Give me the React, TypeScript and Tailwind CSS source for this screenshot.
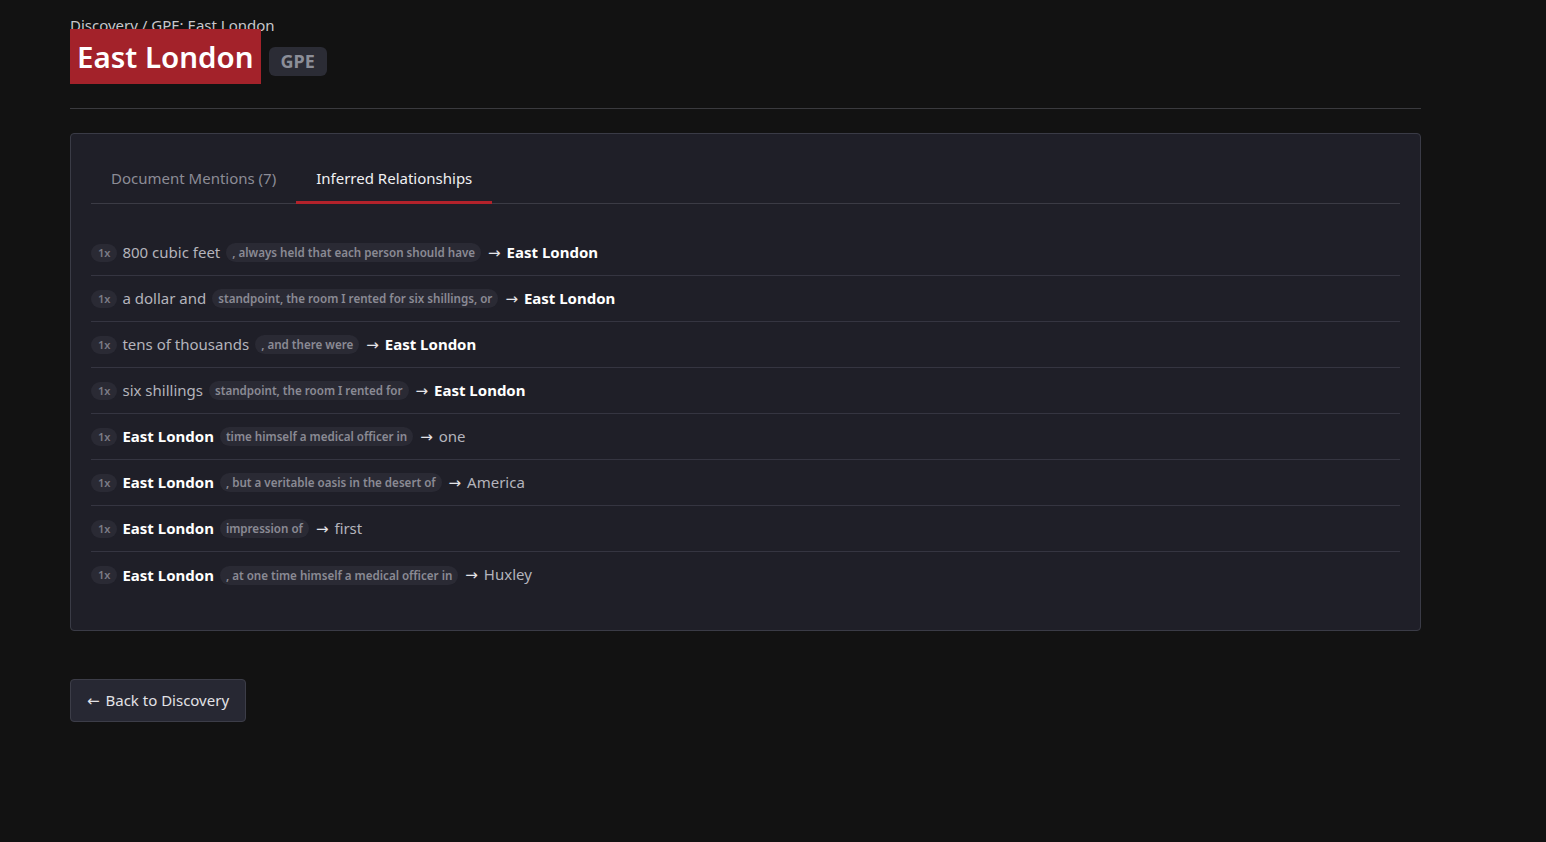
import React from "react";

type Row = { src: string; srcBold?: boolean; ctx: string; tgt: string; tgtBold?: boolean };

const rows: Row[] = [
  { src: "800 cubic feet", ctx: ", always held that each person should have", tgt: "East London", tgtBold: true },
  { src: "a dollar and", ctx: "standpoint, the room I rented for six shillings, or", tgt: "East London", tgtBold: true },
  { src: "tens of thousands", ctx: ", and there were", tgt: "East London", tgtBold: true },
  { src: "six shillings", ctx: "standpoint, the room I rented for", tgt: "East London", tgtBold: true },
  { src: "East London", srcBold: true, ctx: "time himself a medical officer in", tgt: "one" },
  { src: "East London", srcBold: true, ctx: ", but a veritable oasis in the desert of", tgt: "America" },
  { src: "East London", srcBold: true, ctx: "impression of", tgt: "first" },
  { src: "East London", srcBold: true, ctx: ", at one time himself a medical officer in", tgt: "Huxley" },
];

export default function App() {
  return (
    <div
      className="min-h-[842px] w-full bg-[#121212] text-[#d4d4d8]"
      style={{ fontFamily: '"Noto Sans", "Open Sans", sans-serif' }}
    >
      <div className="ml-[70px] w-[1351px] pt-[14px]">
        <div className="text-[15px] leading-[22px] text-[#c8c8cc]">Discovery / GPE: East London</div>
        <div className="-mt-[7px] flex items-center gap-2">
          <h1 className="bg-[#a3222a] px-[7px] pt-[5px] pb-[4px] text-[29.5px] font-semibold leading-[46px] text-white">
            East London
          </h1>
          <span className="mt-[10px] rounded-md bg-[#2b2c35] px-[12px] py-[1px] text-[18px] font-bold leading-[27px] text-[#8b8e98]">
            GPE
          </span>
        </div>
        <div className="mt-[24px] h-px bg-[#3a3a3e]" />

        <div className="mt-[24px] rounded border border-[#3a3b46] bg-[#1f1f28] px-[20px] pt-[24px] pb-[32px]">
          <div className="flex border-b border-[#3b3b45]">
            <div className="px-[20px] pb-[14px] pt-[9px] text-[15px] leading-[22px] text-[#8c8c96]">
              Document Mentions (7)
            </div>
            <div className="-mb-px border-b-[3px] border-[#b3222b] px-[20px] pb-[11px] pt-[9px] text-[15px] leading-[22px] text-[#f0f0f2]">
              Inferred Relationships
            </div>
          </div>

          <div className="mt-[26px]">
            {rows.map((r, i) => (
              <div
                key={i}
                className={`flex h-[46px] items-center gap-[5px] ${i < rows.length - 1 ? "border-b border-[#353541]" : ""}`}
              >
                <span className="rounded-full bg-[#2a2a34] px-[7px] text-[11px] font-semibold leading-[18px] text-[#7c7c86]">
                  1x
                </span>
                <span
                  className={
                    r.srcBold
                      ? "text-[15px] font-bold text-white"
                      : "text-[15px] text-[#b4b4bc]"
                  }
                >
                  {r.src}
                </span>
                <span className="ml-[1px] rounded-full bg-[#2a2a34] px-[6px] text-[11.6px] font-semibold leading-[19px] text-[#8a8a94]">
                  {r.ctx}
                </span>
                <span
                  className={
                    r.tgtBold
                      ? "ml-[2px] text-[15px] font-bold text-white"
                      : "ml-[2px] text-[15px] text-[#b4b4bc]"
                  }
                >
                  <span
                    className="mr-[2px] font-normal text-[#e4e4e8]"
                    style={{ fontFamily: '"DejaVu Sans", sans-serif' }}
                  >
                    →
                  </span>{" "}
                  {r.tgt}
                </span>
              </div>
            ))}
          </div>
        </div>

        <button className="mt-[48px] rounded border border-[#3c3d48] bg-[#272833] px-[16px] py-[9px] text-[15px] leading-[22px] text-[#e2e2e6]">
          <span className="mr-[2px]" style={{ fontFamily: '"DejaVu Sans", sans-serif' }}>←</span> Back to Discovery
        </button>
      </div>
    </div>
  );
}
